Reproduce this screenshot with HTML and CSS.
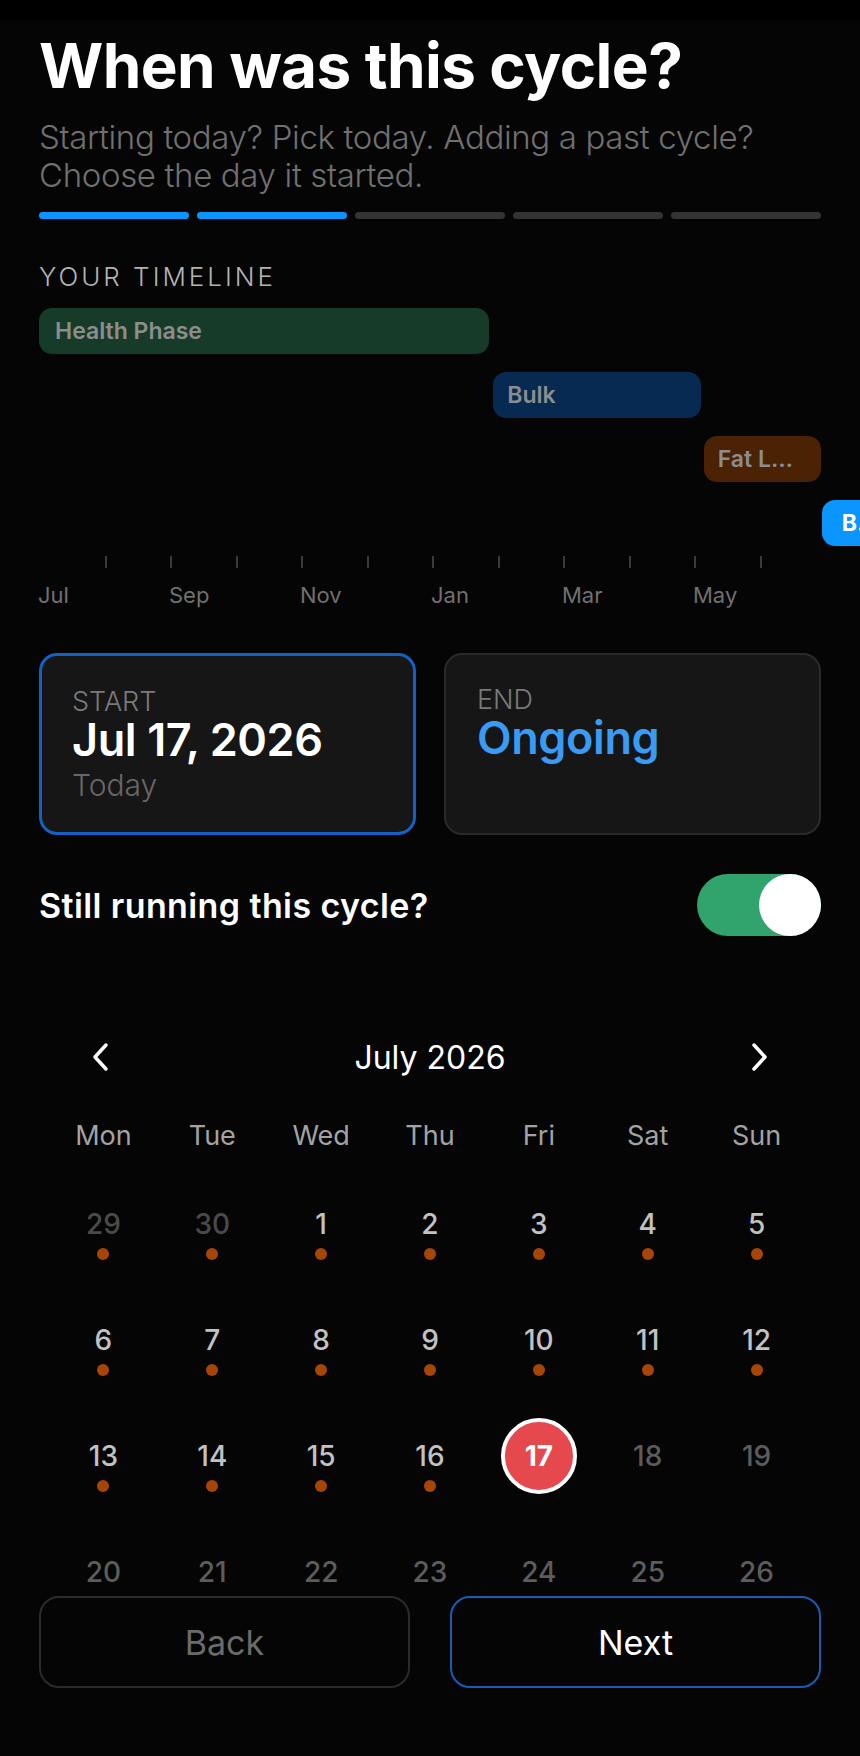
FILE: index.html
```html
<!DOCTYPE html>
<html lang="en">
<head>
  <meta charset="UTF-8" />
  <meta name="viewport" content="width=device-width, initial-scale=1.0"/>
  <title>New Cycle – Dates</title>
  <link rel="stylesheet" href="styles.css">
</head>
<body>
  <div class="screen">
    <div class="status-bar"></div>

    <main class="content">
      <h1 class="title">When was this cycle?</h1>
      <p class="subtitle">Starting today? Pick today. Adding a past cycle?<br>Choose the day it started.</p>

      <div class="steps">
        <span class="step done"></span>
        <span class="step done"></span>
        <span class="step"></span>
        <span class="step"></span>
        <span class="step"></span>
      </div>

      <section class="timeline">
        <h2 class="section-label">YOUR TIMELINE</h2>
        <div class="lanes">
          <div class="lane"><div class="phase phase-green" style="margin-left: 0%; width: 57.5%">Health Phase</div></div>
          <div class="lane"><div class="phase phase-navy" style="margin-left: 58.1%; width: 26.6%">Bulk</div></div>
          <div class="lane"><div class="phase phase-brown" style="margin-left: 85%; width: 15%">Fat L…</div></div>
          <div class="lane"><div class="phase phase-current" style="margin-left: 100.1%; width: 9%">B…</div></div>
        </div>
        <div class="axis">
          <div class="month first"><span class="tick"></span><span class="month-label">Jul</span></div>
          <div class="month"><span class="tick"></span></div>
          <div class="month"><span class="tick"></span><span class="month-label">Sep</span></div>
          <div class="month"><span class="tick"></span></div>
          <div class="month"><span class="tick"></span><span class="month-label">Nov</span></div>
          <div class="month"><span class="tick"></span></div>
          <div class="month"><span class="tick"></span><span class="month-label">Jan</span></div>
          <div class="month"><span class="tick"></span></div>
          <div class="month"><span class="tick"></span><span class="month-label">Mar</span></div>
          <div class="month"><span class="tick"></span></div>
          <div class="month"><span class="tick"></span><span class="month-label">May</span></div>
          <div class="month"><span class="tick"></span></div>
        </div>
      </section>

      <div class="range">
        <div class="range-card active">
          <div class="range-label">START</div>
          <div class="range-value">Jul 17, 2026</div>
          <div class="range-note">Today</div>
        </div>
        <div class="range-card">
          <div class="range-label">END</div>
          <div class="range-value ongoing">Ongoing</div>
        </div>
      </div>

      <div class="toggle-row">
        <span class="toggle-label">Still running this cycle?</span>
        <span class="switch on"><span class="knob"></span></span>
      </div>

      <section class="calendar">
        <div class="cal-head">
          <button class="cal-nav" aria-label="Previous month">
            <svg width="20" height="30" viewBox="0 0 20 30"><polyline points="15,3 4,15 15,27" fill="none" stroke="#fff" stroke-width="3.5" stroke-linecap="round" stroke-linejoin="round"/></svg>
          </button>
          <span class="cal-title">July 2026</span>
          <button class="cal-nav" aria-label="Next month">
            <svg width="20" height="30" viewBox="0 0 20 30"><polyline points="5,3 16,15 5,27" fill="none" stroke="#fff" stroke-width="3.5" stroke-linecap="round" stroke-linejoin="round"/></svg>
          </button>
        </div>

        <div class="weekdays">
          <span>Mon</span><span>Tue</span><span>Wed</span><span>Thu</span><span>Fri</span><span>Sat</span><span>Sun</span>
        </div>

        <div class="days">
          <div class="day other"><span class="num">29</span><span class="dot"></span></div>
          <div class="day other"><span class="num">30</span><span class="dot"></span></div>
          <div class="day"><span class="num">1</span><span class="dot"></span></div>
          <div class="day"><span class="num">2</span><span class="dot"></span></div>
          <div class="day"><span class="num">3</span><span class="dot"></span></div>
          <div class="day"><span class="num">4</span><span class="dot"></span></div>
          <div class="day"><span class="num">5</span><span class="dot"></span></div>

          <div class="day"><span class="num">6</span><span class="dot"></span></div>
          <div class="day"><span class="num">7</span><span class="dot"></span></div>
          <div class="day"><span class="num">8</span><span class="dot"></span></div>
          <div class="day"><span class="num">9</span><span class="dot"></span></div>
          <div class="day"><span class="num">10</span><span class="dot"></span></div>
          <div class="day"><span class="num">11</span><span class="dot"></span></div>
          <div class="day"><span class="num">12</span><span class="dot"></span></div>

          <div class="day"><span class="num">13</span><span class="dot"></span></div>
          <div class="day"><span class="num">14</span><span class="dot"></span></div>
          <div class="day"><span class="num">15</span><span class="dot"></span></div>
          <div class="day"><span class="num">16</span><span class="dot"></span></div>
          <div class="day selected"><span class="num">17</span></div>
          <div class="day future"><span class="num">18</span></div>
          <div class="day future"><span class="num">19</span></div>

          <div class="day future"><span class="num">20</span></div>
          <div class="day future"><span class="num">21</span></div>
          <div class="day future"><span class="num">22</span></div>
          <div class="day future"><span class="num">23</span></div>
          <div class="day future"><span class="num">24</span></div>
          <div class="day future"><span class="num">25</span></div>
          <div class="day future"><span class="num">26</span></div>
        </div>
      </section>
    </main>

    <footer class="actions">
      <button class="btn">Back</button>
      <button class="btn primary">Next</button>
    </footer>
  </div>
</body>
</html>
```

FILE: styles.css
```css
* {
  box-sizing: border-box;
}

body {
  margin: 0;
  background: #050505;
  color: #fff;
  font-family: "Inter", "Noto Sans", sans-serif;
  overflow: hidden;
}

.screen {
  height: 100vh;
  display: flex;
  flex-direction: column;
  overflow: hidden;
}

.status-bar {
  height: 20px;
  flex-shrink: 0;
  background: #000;
}

.content {
  flex: 1;
  min-height: 0;
  overflow: hidden;
  padding: 0 39px;
}

.title {
  margin: 12px 0 0;
  font-size: 62px;
  line-height: 68px;
  font-weight: 700;
  letter-spacing: -0.6px;
}

.subtitle {
  margin: 18px 0 0;
  font-size: 33px;
  line-height: 38px;
  font-weight: 300;
  letter-spacing: -0.35px;
  color: #707070;
}

/* step progress */
.steps {
  display: flex;
  gap: 8px;
  margin-top: 18px;
}

.step {
  flex: 1;
  height: 7px;
  border-radius: 4px;
  background: #333;
}

.step.done {
  background: #0a95ff;
}

/* timeline */
.section-label {
  margin: 42px 0 0;
  font-size: 26px;
  line-height: 32px;
  font-weight: 300;
  letter-spacing: 3px;
  color: #b3b3b3;
}

.lanes {
  margin-top: 15px;
  display: flex;
  flex-direction: column;
  gap: 18px;
}

.lane {
  height: 46px;
  display: flex;
}

.phase {
  flex-shrink: 0;
  height: 46px;
  border-radius: 13px;
  padding: 0 16px;
  font-size: 23px;
  line-height: 46px;
  font-weight: 600;
  color: #8d8d8d;
  white-space: nowrap;
  overflow: hidden;
}

.phase-green { background: #173b29; }
.phase-navy { background: #062a52; padding-left: 14px; }
.phase-brown { background: #4b2204; padding-left: 14px; }
.phase-current {
  background: #0a95ff;
  color: #fff;
  font-weight: 700;
  padding-left: 20px;
}

.axis {
  display: grid;
  grid-template-columns: repeat(12, 1fr);
  width: calc(100% + 4px);
  margin: 10px 0 0 1px;
}

.month {
  display: flex;
  flex-direction: column;
  height: 52px;
}

.tick {
  width: 2px;
  height: 12px;
  margin-left: -1px;
  background: #3a3a3a;
}

.month.first .tick {
  visibility: hidden;
}

.month-label {
  margin-top: 14px;
  margin-left: -2px;
  font-size: 22px;
  line-height: 26px;
  color: #707070;
  white-space: nowrap;
}

/* start / end cards */
.range {
  display: grid;
  grid-template-columns: 1fr 1fr;
  gap: 28px;
  margin-top: 45px;
}

.range-card {
  height: 182px;
  border-radius: 18px;
  background: #161616;
  border: 2px solid #2a2a2a;
  padding: 30px 30px 0 31px;
}

.range-card.active {
  border: 3px solid #1560c2;
  padding: 31px 30px 0 30px;
}

.range-label {
  font-size: 27px;
  line-height: 30px;
  font-weight: 300;
  color: #7a7a7a;
}

.range-value {
  font-size: 45px;
  line-height: 46px;
  font-weight: 600;
  letter-spacing: -0.4px;
}

.range-value.ongoing {
  color: #3a9bf5;
}

.range-note {
  margin-top: 4px;
  font-size: 30px;
  line-height: 36px;
  font-weight: 300;
  color: #676767;
}

/* toggle */
.toggle-row {
  display: flex;
  align-items: center;
  justify-content: space-between;
  margin-top: 39px;
}

.toggle-label {
  font-size: 34px;
  font-weight: 600;
  letter-spacing: 0.4px;
}

.switch {
  display: flex;
  width: 124px;
  height: 62px;
  border-radius: 31px;
  background: #3a3a3c;
}

.switch.on {
  justify-content: flex-end;
  background: #30a46c;
}

.knob {
  width: 62px;
  height: 62px;
  border-radius: 50%;
  background: #fff;
}

/* calendar */
.calendar {
  margin-top: 101px;
  padding: 0 10px;
}

.cal-head {
  display: flex;
  align-items: center;
  justify-content: space-between;
  height: 40px;
  padding: 0 36px;
}

.cal-nav {
  width: 32px;
  height: 40px;
  padding: 0;
  border: none;
  background: none;
  display: flex;
  align-items: center;
  justify-content: center;
}

.cal-title {
  font-size: 32px;
  font-weight: 400;
}

.weekdays {
  display: grid;
  grid-template-columns: repeat(7, 1fr);
  margin-top: 43px;
  font-size: 27px;
  line-height: 32px;
  color: #a3a3a3;
  text-align: center;
}

.days {
  display: grid;
  grid-template-columns: repeat(7, 1fr);
  grid-auto-rows: 116px;
  margin-top: 52px;
}

.day {
  display: flex;
  flex-direction: column;
  align-items: center;
}

.num {
  position: relative;
  z-index: 0;
  font-size: 28px;
  line-height: 40px;
  font-weight: 500;
  color: #c2c2c2;
}

.dot {
  width: 12px;
  height: 12px;
  margin-top: 4px;
  border-radius: 50%;
  background: #a64506;
}

.day.other .num {
  color: #4a4a4a;
}

.day.future .num {
  color: #5c5c5c;
}

.day.selected .num {
  color: #fff;
  font-weight: 700;
}

.day.selected .num::before {
  content: "";
  position: absolute;
  z-index: -1;
  left: 50%;
  top: 50%;
  width: 68px;
  height: 68px;
  transform: translate(-50%, -50%);
  border-radius: 50%;
  border: 4px solid #fff;
  background: #e5484d;
}

/* footer buttons */
.actions {
  flex-shrink: 0;
  display: grid;
  grid-template-columns: 1fr 1fr;
  gap: 40px;
  padding: 2px 39px 68px;
  background: #050505;
}

.btn {
  height: 92px;
  border-radius: 20px;
  border: 2px solid #2b2b2b;
  background: transparent;
  color: #6b6b6b;
  font: inherit;
  font-size: 34px;
  font-weight: 400;
}

.btn.primary {
  border-color: #1a5cb5;
  color: #fff;
}
```
